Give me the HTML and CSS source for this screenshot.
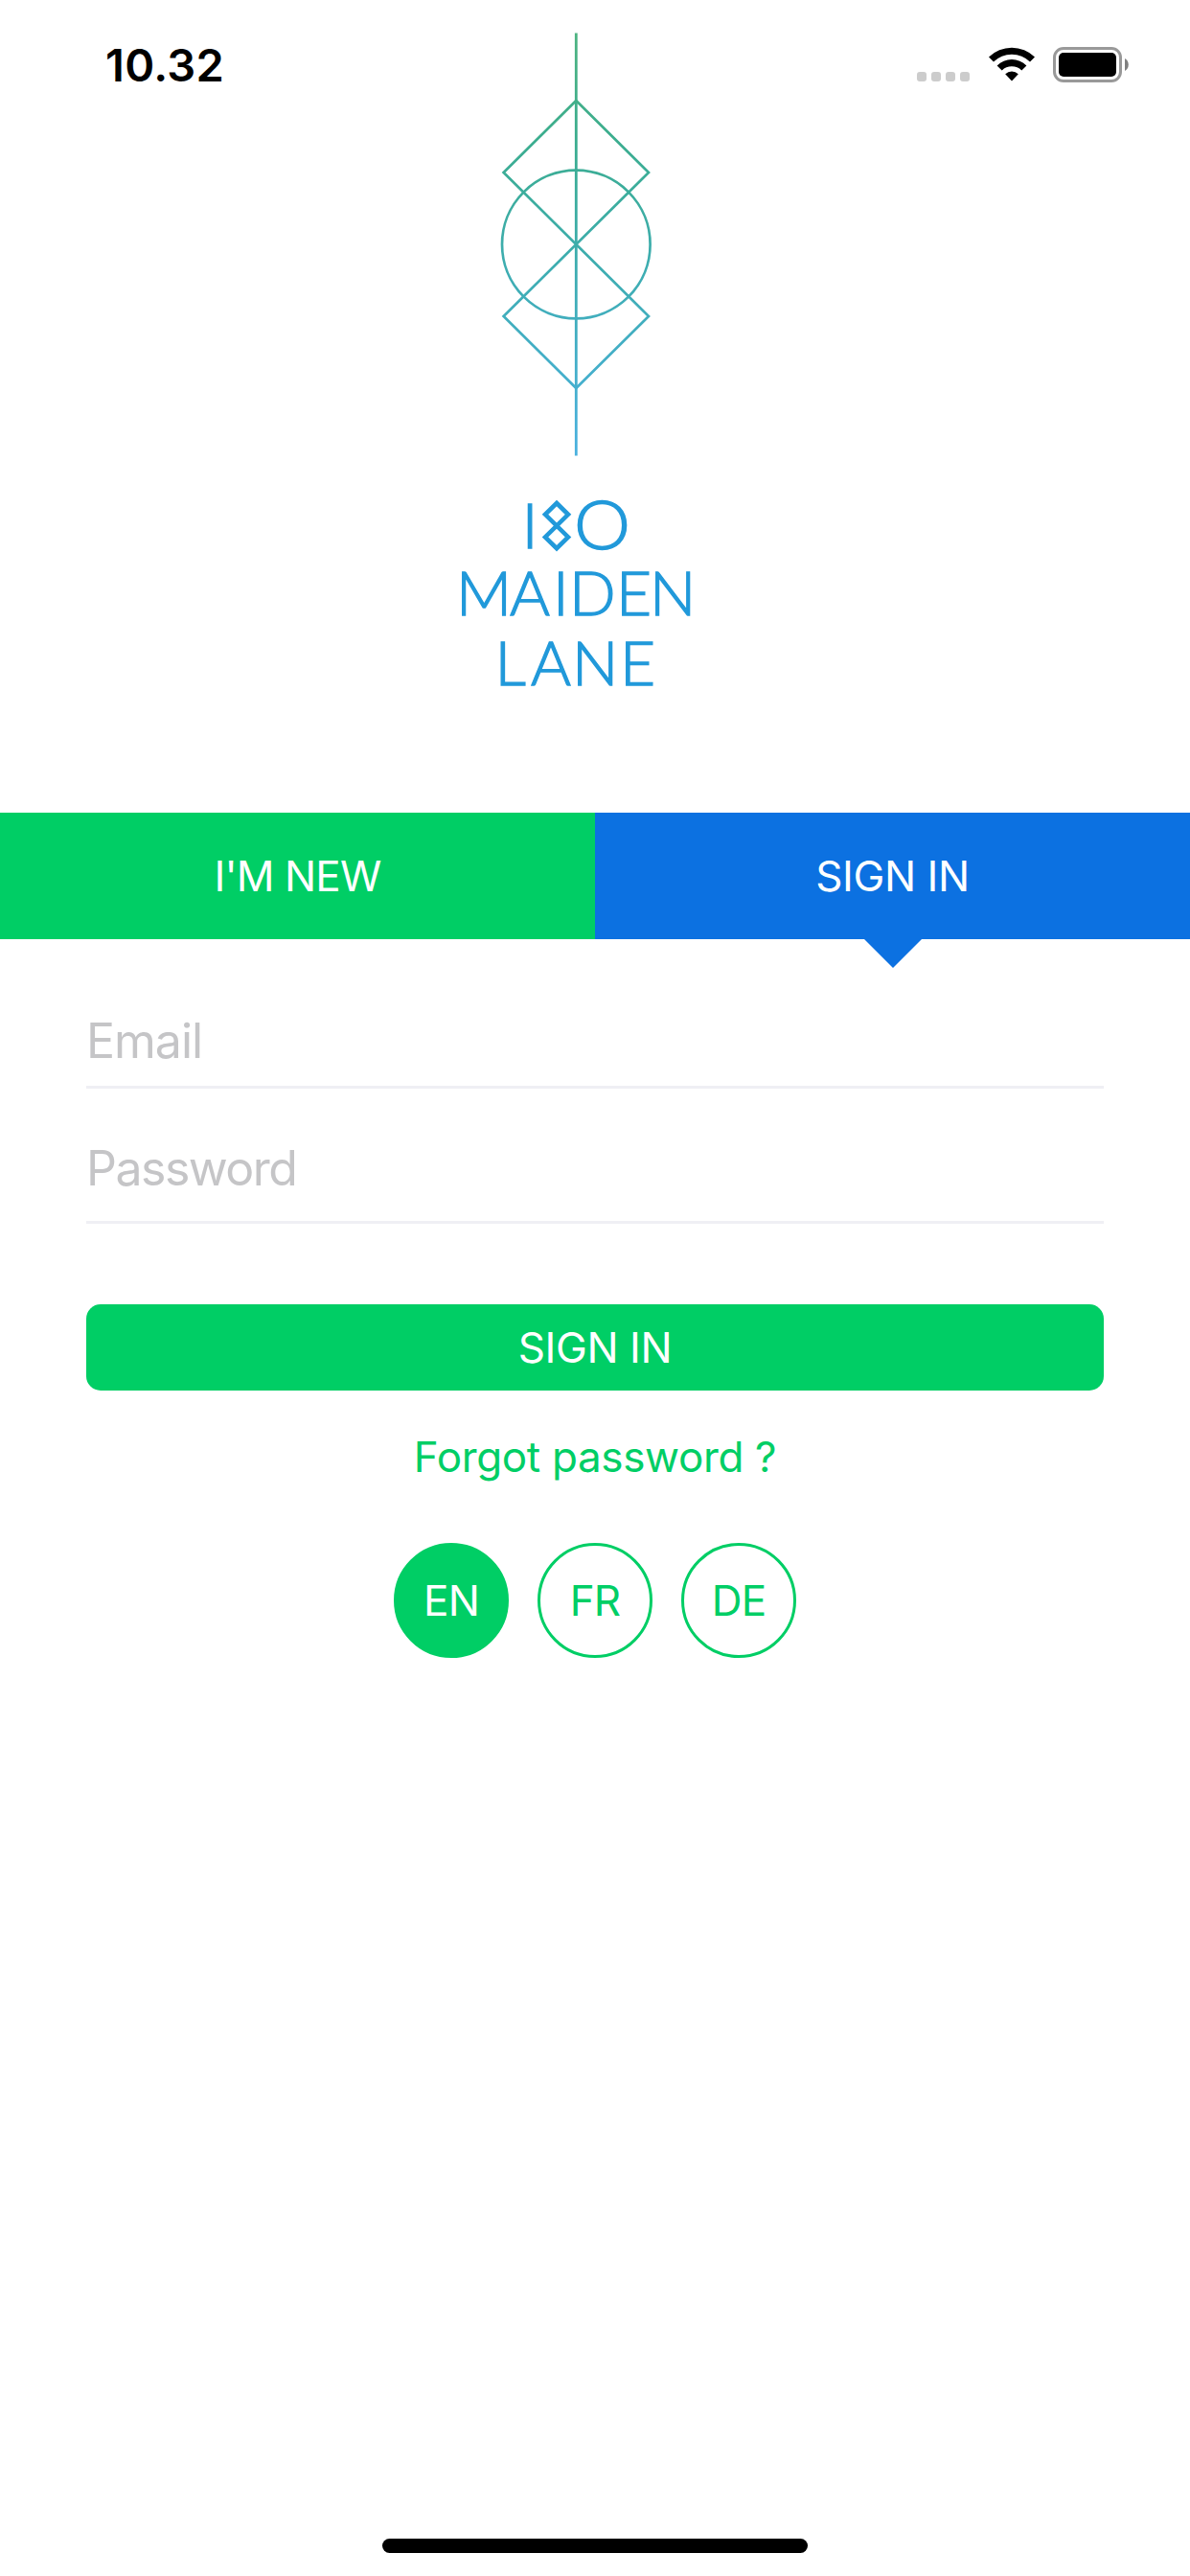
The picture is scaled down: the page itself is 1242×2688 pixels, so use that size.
FILE: index.html
```html
<!DOCTYPE html>
<html lang="en">
<head>
    <meta charset="UTF-8">
    <meta name="viewport" content="width=device-width, initial-scale=1.0">
    <title>180 Maiden Lane</title>
    <link rel="stylesheet" href="styles.css">
</head>
<body>
    <div class="status-bar">
        <span class="time">10.32</span>
        <div class="status-icons">
            <div class="signal"><i></i><i></i><i></i><i></i></div>
            <svg class="wifi" width="48" height="36" viewBox="0 0 48 36">
                <path d="M0 10.6 A34.2 34.2 0 0 1 48 10.6 L43 15.6 A27 27 0 0 0 5 15.6 Z"/>
                <path d="M8.6 19.4 A22 22 0 0 1 39.4 19.4 L34.3 24.4 A14.8 14.8 0 0 0 13.7 24.4 Z"/>
                <path d="M17.2 28.2 A10 10 0 0 1 30.8 28.2 L24 35.6 Z"/>
            </svg>
            <svg class="battery" width="80" height="37" viewBox="0 0 80 37">
                <rect x="1.5" y="1.5" width="69" height="34" rx="9.5" fill="none" stroke="#999" stroke-width="3"/>
                <rect x="6" y="6" width="60" height="25" rx="5"/>
                <path d="M75 12 A7.5 7.5 0 0 1 75 25 Z" fill="#808080"/>
            </svg>
        </div>
    </div>

    <header class="brand">
        <svg class="logo" width="320" height="740" viewBox="440 0 320 740">
            <defs>
                <linearGradient id="fade" gradientUnits="userSpaceOnUse" x1="0" y1="34" x2="0" y2="475">
                    <stop offset="0" stop-color="#2fa76c"/>
                    <stop offset="0.25" stop-color="#1a9f7b"/>
                    <stop offset="0.55" stop-color="#1c9fa3"/>
                    <stop offset="1" stop-color="#2ba4da"/>
                </linearGradient>
            </defs>
            <g class="mark">
                <rect x="599.9" y="34.5" width="2.8" height="441" fill="url(#fade)" stroke="none"/>
                <path d="M601.3 105 L677 180 L525.6 330 L601.3 405 L677 330 L525.6 180 Z"/>
                <circle cx="601.3" cy="255" r="77.3"/>
            </g>
            <path class="eight" d="M581 525 L593 536.8 L569 560.4 L581 572.2 L593 560.4 L569 536.8 Z"/>
            <text class="word one" x="544.5" y="572">I</text>
            <text class="word zero" x="599" y="573" textLength="59" lengthAdjust="spacingAndGlyphs">O</text>
            <text class="word" y="642.3" x="476 532 577 594 643 678">MAIDEN</text>
            <text class="word" y="714.5" x="516.5 554 597 647">LANE</text>
        </svg>
    </header>

    <nav class="tabs">
        <a class="tab">I'M NEW</a>
        <a class="tab active">SIGN IN</a>
    </nav>

    <form class="login-form">
        <input class="field email" type="text" placeholder="Email">
        <input class="field password" type="password" placeholder="Password">
        <button class="submit" type="button">SIGN IN</button>
        <a class="forgot">Forgot password ?</a>
    </form>

    <div class="languages">
        <a class="lang selected">EN</a>
        <a class="lang">FR</a>
        <a class="lang">DE</a>
    </div>

    <div class="home-indicator"></div>
</body>
</html>
```
FILE: styles.css
```css
* {
    box-sizing: border-box;
}
body {
    margin: 0;
    height: 2688px;
    display: flex;
    flex-direction: column;
    background-color: #fff;
    font-family: Inter, "Liberation Sans", sans-serif;
    font-size: 44px;
    position: relative;
}
/* sits on top of the logo */
.status-bar {
    position: absolute;
    top: 0;
    left: 0;
    width: 100%;
    height: 135px;
    padding: 0 63px 0 110px;
    display: flex;
    justify-content: space-between;
    align-items: center;
}
.time {
    font-size: 47px;
    font-weight: 600;
    letter-spacing: 0.3px;
    color: #000;
}
.status-icons {
    display: flex;
    align-items: flex-end;
    height: 37px;
}
.signal {
    display: flex;
    gap: 5px;
    margin: 0 20px 1px 0;
}
.signal i {
    width: 10px;
    height: 10px;
    border-radius: 3px;
    background-color: #ccc;
}
.wifi {
    margin: 0 19px 1px 0;
}
.brand {
    height: 848px;
    padding-left: 440px;
}
.logo {
    display: block;
}
.mark {
    fill: none;
    stroke: url(#fade);
    stroke-width: 2.7;
    opacity: 0.85;
}
.eight {
    fill: none;
    stroke: #2199da;
    stroke-width: 4.6;
}
.word {
    font-family: Lato, sans-serif;
    font-size: 64px;
    font-weight: 300;
    fill: #2199da;
    stroke: #2199da;
    stroke-width: 1.3;
}
.one {
    font-size: 66px;
}
.zero {
    font-size: 70px;
}
.tabs {
    display: flex;
    height: 132px;
}
.tab {
    flex: 1;
    display: flex;
    align-items: center;
    justify-content: center;
    background-color: #00ce65;
    color: #fff;
    letter-spacing: -0.9px;
}
.tab.active {
    position: relative;
    background-color: #0c71e1;
    letter-spacing: -0.4px;
}
.tab.active::after {
    content: "";
    position: absolute;
    top: 100%;
    left: 50%;
    margin-left: -30px;
    border: 30px solid transparent;
    border-top-color: #0c71e1;
    border-bottom: none;
}
.login-form {
    padding: 0 90px;
    display: flex;
    flex-direction: column;
}
.field {
    border: none;
    border-bottom: 3px solid #efeff4;
    padding: 0;
    background: none;
    font-family: inherit;
    font-size: 50px;
    letter-spacing: -1.5px;
    outline: none;
}
.field::placeholder {
    color: #c5c5c7;
    opacity: 1;
}
.email {
    height: 97px;
    margin-top: 59px;
    letter-spacing: -1px;
}
.password {
    height: 121px;
    margin-top: 20px;
    padding-top: 8px;
}
.submit {
    height: 90px;
    margin-top: 84px;
    border: none;
    border-radius: 15px;
    background-color: #00ce65;
    color: #fff;
    font-family: inherit;
    font-size: 44px;
    letter-spacing: -0.4px;
}
.forgot {
    margin-top: 39px;
    line-height: 60px;
    text-align: center;
    color: #00ce65;
    letter-spacing: -0.35px;
}
.languages {
    display: flex;
    justify-content: center;
    gap: 30px;
    margin-top: 60px;
}
.lang {
    width: 120px;
    height: 120px;
    display: flex;
    align-items: center;
    justify-content: center;
    border: 3px solid #00ce65;
    border-radius: 50%;
    color: #00ce65;
    letter-spacing: -0.8px;
}
.lang.selected {
    background-color: #00ce65;
    color: #fff;
}
.home-indicator {
    width: 444px;
    height: 15px;
    margin: auto auto 24px;
    border-radius: 8px;
    background-color: #000;
}
```
